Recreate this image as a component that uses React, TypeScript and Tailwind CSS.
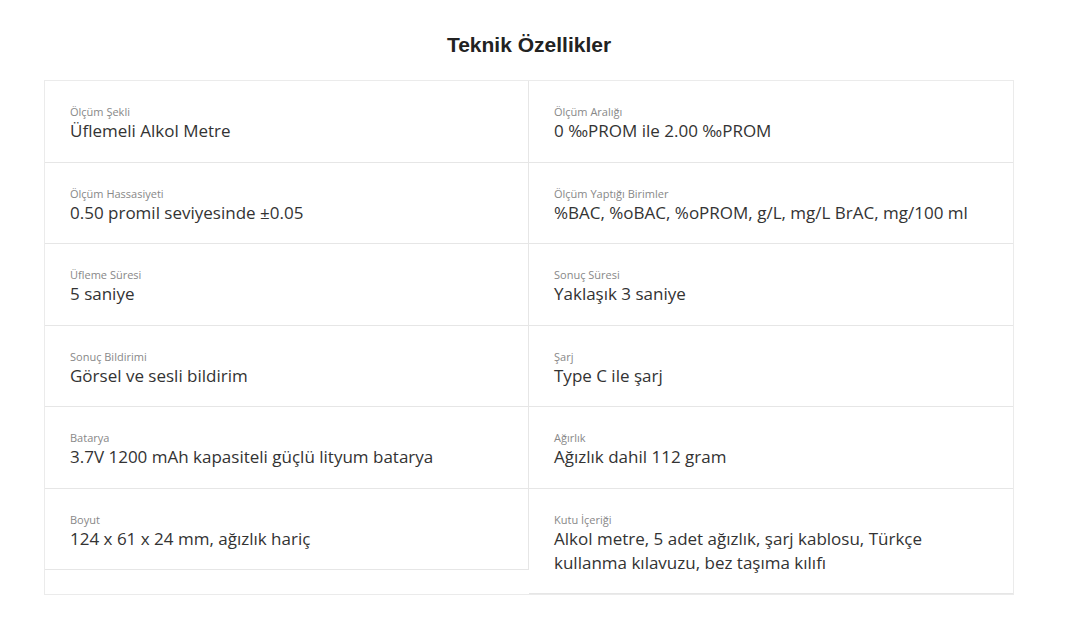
const specs = [
  { label: "Ölçüm Şekli", value: "Üflemeli Alkol Metre" },
  { label: "Ölçüm Aralığı", value: "0 ‰PROM ile 2.00 ‰PROM" },
  { label: "Ölçüm Hassasiyeti", value: "0.50 promil seviyesinde ±0.05" },
  { label: "Ölçüm Yaptığı Birimler", value: "%BAC, %oBAC, %oPROM, g/L, mg/L BrAC, mg/100 ml" },
  { label: "Üfleme Süresi", value: "5 saniye" },
  { label: "Sonuç Süresi", value: "Yaklaşık 3 saniye" },
  { label: "Sonuç Bildirimi", value: "Görsel ve sesli bildirim" },
  { label: "Şarj", value: "Type C ile şarj" },
  { label: "Batarya", value: "3.7V 1200 mAh kapasiteli güçlü lityum batarya" },
  { label: "Ağırlık", value: "Ağızlık dahil 112 gram" },
  { label: "Boyut", value: "124 x 61 x 24 mm, ağızlık hariç" },
  { label: "Kutu İçeriği", value: "Alkol metre, 5 adet ağızlık, şarj kablosu, Türkçe kullanma kılavuzu, bez taşıma kılıfı" },
];

const App = () => {
  return (
    <div className="min-h-screen bg-white">
      <div className="ml-[44px] w-[970px] pt-[32px]">
        {/* title */}
        <h2 className="text-center text-[21px] leading-[26px] font-bold text-[#222] font-['Liberation_Sans',Arial,sans-serif]">
          Teknik Özellikler
        </h2>

        {/* spec table */}
        <div className="mt-[22px] grid grid-cols-2 items-start border border-[#ebebeb]">
          {specs.map((s, i) => (
            <div
              key={s.label}
              className={
                "border-b border-[#e6e6e6] pt-[23px] pb-[18.5px] pr-4 " +
                (i % 2 === 0 ? "border-r pl-[25px]" : "pl-[25px]")
              }
            >
              <p className="text-[11px] leading-[15px] text-[#888] font-['Open_Sans',sans-serif]">
                {s.label}
              </p>
              <p className="text-[17px] leading-6 text-[#333] font-['Open_Sans',sans-serif]">
                {s.value}
              </p>
            </div>
          ))}
        </div>
      </div>
    </div>
  );
};

export default App;
